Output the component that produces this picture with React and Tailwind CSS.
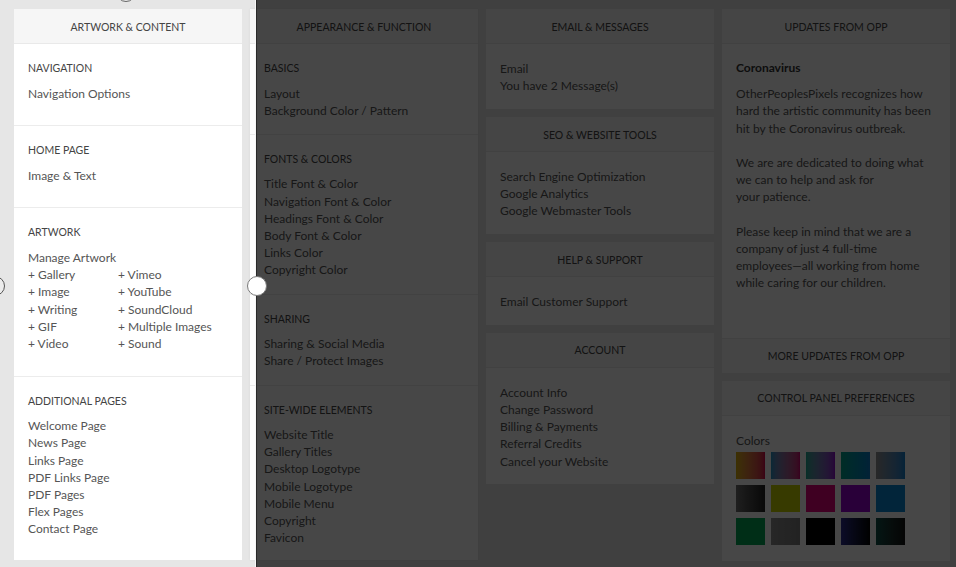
const font = { fontFamily: "Lato, 'Open Sans', sans-serif" };

function Panel({ title, children, className = "" }) {
  return (
    <div className={`bg-white ${className}`}>
      <div className="flex h-[35px] items-center justify-center border-b border-[#e9e9e9] bg-[#f6f6f6] pt-[3px] text-[10.5px] uppercase text-[#444]">
        {title}
      </div>
      {children}
    </div>
  );
}

function Links({ items }) {
  return (
    <ul className="text-[12px] leading-[17.2px] text-[#555]">
      {items.map((item) => (
        <li key={item}>{item}</li>
      ))}
    </ul>
  );
}

function Section({ title, items, pb = "pb-[15px]", children }) {
  return (
    <div className={`px-[14px] pt-[16px] ${pb}`}>
      <div className="text-[10.5px] uppercase leading-[17px] text-[#444]">{title}</div>
      <div className="mt-[7.5px]">{children || <Links items={items} />}</div>
    </div>
  );
}

function Plain({ items }) {
  return (
    <div className="px-[14px] pb-[14.5px] pt-[16px]">
      <Links items={items} />
    </div>
  );
}

const swatches = [
  "bg-linear-to-r from-[#d8b000] to-[#d0004a]",
  "bg-linear-to-r from-[#1a90c0] to-[#c80070]",
  "bg-linear-to-r from-[#10a890] to-[#8a00c8]",
  "bg-linear-to-r from-[#00a088] to-[#0c78c4]",
  "bg-linear-to-r from-[#909090] to-[#0a7cc8]",
  "bg-linear-to-r from-[#707070] to-[#202020]",
  "bg-[#c4d000]",
  "bg-[#e0007a]",
  "bg-[#9400cc]",
  "bg-[#0a86d0]",
  "bg-[#00a655]",
  "bg-linear-to-r from-[#8c8c8c] to-[#7a7a7a]",
  "bg-black",
  "bg-linear-to-r from-[#2c2c90] to-[#050505]",
  "bg-linear-to-r from-[#0a5048] to-[#121212]",
];

export default function App() {
  return (
    <div className="relative h-[567px] w-[956px] overflow-hidden bg-[#e6e6e6]" style={font}>
      <div className="grid grid-cols-[228px_228px_228px_228px] gap-x-2 pl-[14px] pt-[9px]">
        {/* column 1 */}
        <Panel title="Artwork & Content" className="h-[551px]">
          <div className="divide-y divide-[#ececec]">
            <Section title="Navigation" items={["Navigation Options"]} pb="pb-[23.5px]" />
            <Section title="Home Page" items={["Image & Text"]} pb="pb-[23.5px]" />
            <Section title="Artwork" pb="pb-[23.5px]">
              <div className="text-[12px] leading-[17.2px] text-[#555]">
                <div>Manage Artwork</div>
                <div className="grid grid-cols-[90px_1fr]">
                  <div>+ Gallery</div>
                  <div>+ Vimeo</div>
                  <div>+ Image</div>
                  <div>+ YouTube</div>
                  <div>+ Writing</div>
                  <div>+ SoundCloud</div>
                  <div>+ GIF</div>
                  <div>+ Multiple Images</div>
                  <div>+ Video</div>
                  <div>+ Sound</div>
                </div>
              </div>
            </Section>
            <Section
              title="Additional Pages"
              pb="pb-[23px]"
              items={[
                "Welcome Page",
                "News Page",
                "Links Page",
                "PDF Links Page",
                "PDF Pages",
                "Flex Pages",
                "Contact Page",
              ]}
            />
          </div>
        </Panel>

        {/* column 2 */}
        <Panel title="Appearance & Function" className="h-[551px] shadow-[0_0_3px_rgba(0,0,0,0.06)]">
          <div className="divide-y divide-[#ececec]">
            <Section title="Basics" items={["Layout", "Background Color / Pattern"]} />
            <Section
              title="Fonts & Colors"
              items={[
                "Title Font & Color",
                "Navigation Font & Color",
                "Headings Font & Color",
                "Body Font & Color",
                "Links Color",
                "Copyright Color",
              ]}
            />
            <Section title="Sharing" items={["Sharing & Social Media", "Share / Protect Images"]} />
            <Section
              title="Site-Wide Elements"
              items={[
                "Website Title",
                "Gallery Titles",
                "Desktop Logotype",
                "Mobile Logotype",
                "Mobile Menu",
                "Copyright",
                "Favicon",
              ]}
            />
          </div>
        </Panel>

        {/* column 3 */}
        <div className="flex flex-col gap-2">
          <Panel title="Email & Messages">
            <Plain items={["Email", "You have 2 Message(s)"]} />
          </Panel>
          <Panel title="SEO & Website Tools">
            <Plain items={["Search Engine Optimization", "Google Analytics", "Google Webmaster Tools"]} />
          </Panel>
          <Panel title="Help & Support">
            <Plain items={["Email Customer Support"]} />
          </Panel>
          <Panel title="Account">
            <Plain
              items={[
                "Account Info",
                "Change Password",
                "Billing & Payments",
                "Referral Credits",
                "Cancel your Website",
              ]}
            />
          </Panel>
        </div>

        {/* column 4 */}
        <div className="flex flex-col gap-2">
          <Panel title="Updates from OPP">
            <div className="px-[14px] pb-[46px] pt-[15px] text-[12px] leading-[17.2px] text-[#555]">
              <div className="font-bold text-[#333]">Coronavirus</div>
              <p className="mt-[9px]">
                OtherPeoplesPixels recognizes how
                <br />
                hard the artistic community has been
                <br />
                hit by the Coronavirus outbreak.
              </p>
              <p className="mt-[17.2px]">
                We are are dedicated to doing what
                <br />
                we can to help and ask for
                <br />
                your patience.
              </p>
              <p className="mt-[17.2px]">
                Please keep in mind that we are a
                <br />
                company of just 4 full-time
                <br />
                employees—all working from home
                <br />
                while caring for our children.
              </p>
            </div>
            <div className="flex h-[35px] items-center justify-center border-t border-[#e9e9e9] bg-[#f6f6f6] pt-[3px] text-[10.5px] uppercase text-[#444]">
              More Updates from OPP
            </div>
          </Panel>
          <Panel title="Control Panel Preferences">
            <div className="px-[14px] pb-[16px] pt-[16px]">
              <div className="text-[12px] leading-[17.2px] text-[#555]">Colors</div>
              <div className="mt-[3px] grid grid-cols-[repeat(5,29px)] gap-x-[6px] gap-y-[6px]">
                {swatches.map((c, i) => (
                  <div key={i} className={`h-[27px] ${c}`} />
                ))}
              </div>
            </div>
          </Panel>
        </div>
      </div>

      {/* dim overlay right of the divider */}
      <div className="absolute bottom-0 left-[257px] right-0 top-0 bg-black/[0.72]" />
      <div className="absolute bottom-0 left-[255px] top-0 w-px bg-[#f7f7f7]" />
      <div className="absolute bottom-0 left-[256px] top-0 w-px bg-[#2a2a2a]" />

      {/* drag handles */}
      <div className="absolute left-[247px] top-[276px] h-5 w-5 rounded-full border border-[#7a7a7a] bg-white" />
      <div className="absolute left-[-15px] top-[276px] h-5 w-5 rounded-full border border-[#555] bg-[#ececec]" />
      <div className="absolute left-[116px] top-[-18px] h-5 w-5 rounded-full border border-[#666] bg-[#ececec]" />
    </div>
  );
}
